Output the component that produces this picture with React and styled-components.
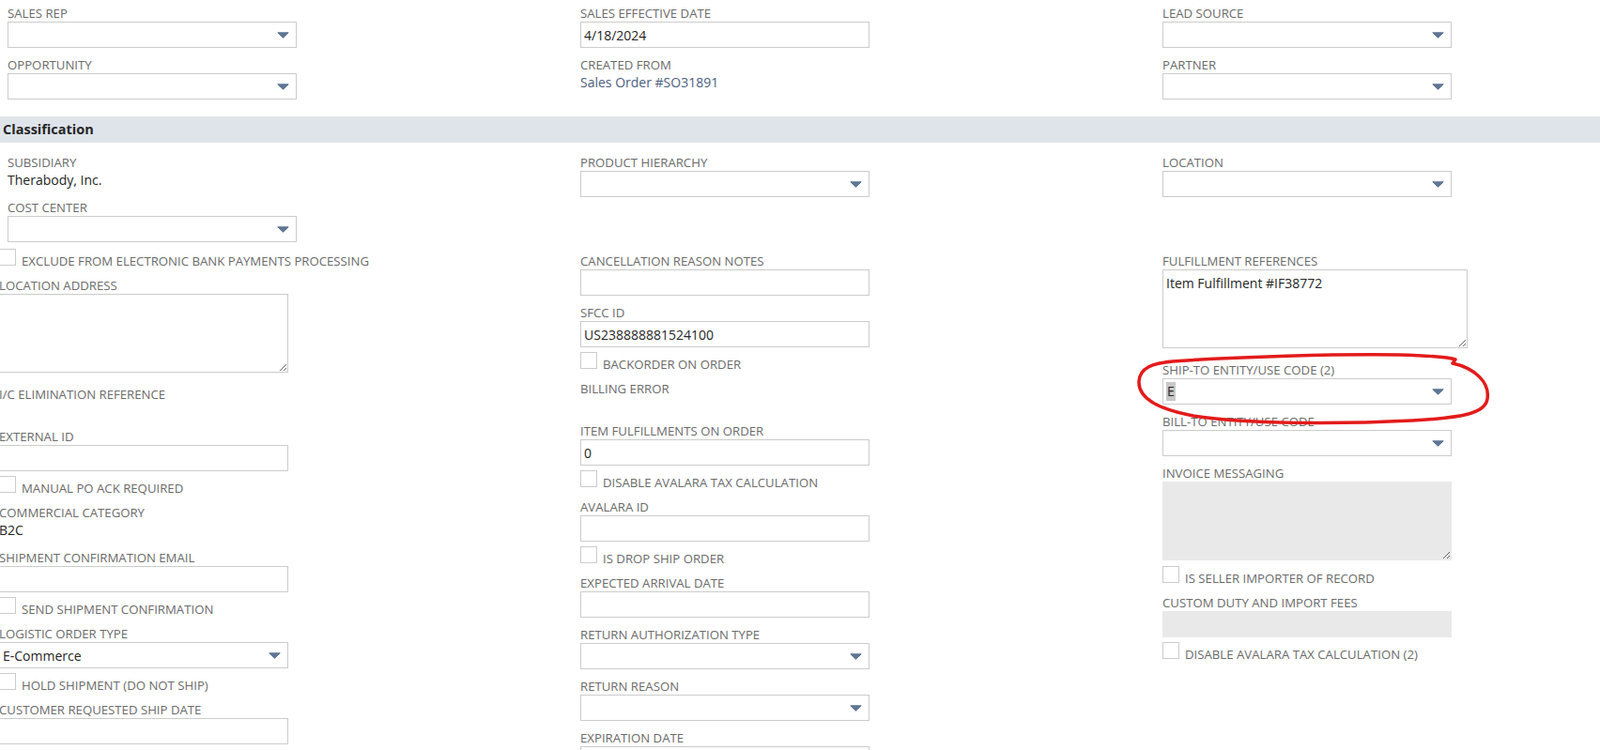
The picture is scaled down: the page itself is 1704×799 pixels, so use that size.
import React from 'react'
import styled, { createGlobalStyle } from 'styled-components'

const GlobalStyle = createGlobalStyle`
  html, body {
    margin: 0;
    padding: 0;
    background: #fff;
  }
  body {
    font-family: "Open Sans", "Liberation Sans", Arial, sans-serif;
  }
  * {
    box-sizing: border-box;
  }
`;

const Page = styled.div`
  position: relative;
  width: 1704px;
  height: 799px;
  overflow: hidden;
  background: #fff;
`;

const FieldGrid = styled.div`
  display: grid;
  grid-template-columns: 610px 620px 1fr;
  padding-left: 8px;
  margin-top: ${p => p.$top || 0}px;
`;

const Column = styled.div`
  display: flex;
  flex-direction: column;
  align-items: flex-start;
  margin-left: ${p => (p.$shift ? '-9px' : '0')};
`;

const SectionBar = styled.div`
  margin-top: 14px;
  height: 28px;
  background: #dfe4eb;
  padding-left: 3px;
  font-size: 14.5px;
  font-weight: 700;
  line-height: 28px;
  color: #262626;
`;

const FieldWrap = styled.div`
  padding: 7px 0 4px;
`;

const Label = styled.div`
  font-size: 13.2px;
  line-height: 15px;
  color: #6b6b6b;
  text-transform: uppercase;
  white-space: nowrap;
  margin-bottom: 1px;
`;

const Value = styled.div`
  min-height: 18px;
  font-size: 14px;
  line-height: 18px;
  padding: 1px 0 2px;
  color: ${p => (p.$link ? '#4d6080' : '#262626')};

  &:empty {
    padding: 0;
  }
`;

const Control = styled.div`
  display: flex;
  align-items: center;
  width: ${p => p.$w}px;
  height: 28px;
  border: 1px solid ${p => (p.$disabled ? '#e9e9e9' : '#cccccc')};
  background: ${p => (p.$disabled ? '#e9e9e9' : '#fff')};
  padding: 0 7px 0 3px;
  font-size: 14px;
  color: #262626;
`;

const ControlText = styled.span`
  flex: 1;
  white-space: nowrap;
  overflow: hidden;
`;

const Selected = styled.span`
  display: inline-block;
  background: #c8c8c8;
  line-height: 20px;
  padding: 0 1px;
`;

const Arrow = styled.svg`
  flex: none;
  width: 13px;
  height: 7px;
`;

const Area = styled.textarea`
  display: block;
  width: ${p => p.$w}px;
  height: 84px;
  margin: 0 0 ${p => (p.disabled ? 1 : 5)}px;
  border: 1px solid ${p => (p.disabled ? '#e9e9e9' : '#cccccc')};
  background: ${p => (p.disabled ? '#e9e9e9' : '#fff')};
  padding: 5px 3px;
  font-family: inherit;
  font-size: 14px;
  line-height: 18px;
  color: #262626;
  resize: both;
  outline: none;
`;

const CheckRow = styled.label`
  display: flex;
  align-items: flex-end;
  padding: 1px 0 7px;
`;

const Box = styled.span`
  flex: none;
  width: 18px;
  height: 18px;
  border: 1px solid #cccccc;
  background: #fff;
  margin-right: 6px;
`;

const CheckText = styled.span`
  font-size: 13.2px;
  line-height: 10px;
  color: #6b6b6b;
  text-transform: uppercase;
  white-space: nowrap;
`;

const Annotation = styled.svg`
  position: absolute;
  left: 1205px;
  top: 372px;
  width: 390px;
  height: 86px;
  pointer-events: none;
`;

const DropArrow = () => (
  <Arrow viewBox="0 0 13 7">
    <path d="M0.8 0.8 H12.2 L6.5 6.3 Z" fill="#5f7594" stroke="#5f7594" strokeWidth="1" strokeLinejoin="round" />
  </Arrow>
);

const Select = ({ label, w = 308, value }) => (
  <FieldWrap>
    <Label>{label}</Label>
    <Control $w={w}>
      <ControlText>{value}</ControlText>
      <DropArrow />
    </Control>
  </FieldWrap>
);

const Input = ({ label, w = 308, value, disabled }) => (
  <FieldWrap>
    <Label>{label}</Label>
    <Control $w={w} $disabled={disabled}>
      <ControlText>{value}</ControlText>
    </Control>
  </FieldWrap>
);

const TextArea = ({ label, w = 308, value = '', disabled }) => (
  <FieldWrap>
    <Label>{label}</Label>
    <Area $w={w} disabled={disabled} readOnly defaultValue={value} />
  </FieldWrap>
);

const Text = ({ label, value, link }) => (
  <FieldWrap>
    <Label>{label}</Label>
    <Value $link={link}>{value}</Value>
  </FieldWrap>
);

const Check = ({ label }) => (
  <CheckRow>
    <Box />
    <CheckText>{label}</CheckText>
  </CheckRow>
);

const App = () => {
  return (
    <Page>
      <GlobalStyle />
      <FieldGrid>
        <Column>
          <Select label="Sales Rep" />
          <Select label="Opportunity" />
        </Column>
        <Column>
          <Input label="Sales Effective Date" value="4/18/2024" />
          <Text label="Created From" value="Sales Order #SO31891" link />
        </Column>
        <Column>
          <Select label="Lead Source" />
          <Select label="Partner" />
        </Column>
      </FieldGrid>

      <SectionBar>Classification</SectionBar>

      <FieldGrid $top={7}>
        <Column>
          <Text label="Subsidiary" value="Therabody, Inc." />
          <Select label="Cost Center" />
        </Column>
        <Column>
          <Select label="Product Hierarchy" />
        </Column>
        <Column>
          <Select label="Location" />
        </Column>
      </FieldGrid>

      <FieldGrid $top={2}>
        <Column $shift>
          <Check label="Exclude from Electronic Bank Payments Processing" />
          <TextArea label="Location Address" />
          <Text label="I/C Elimination Reference" />
          <Input label="External ID" />
          <Check label="Manual PO Ack Required" />
          <Text label="Commercial Category" value="B2C" />
          <Input label="Shipment Confirmation Email" />
          <Check label="Send Shipment Confirmation" />
          <Select label="Logistic Order Type" value="E-Commerce" />
          <Check label="Hold Shipment (Do Not Ship)" />
          <Input label="Customer Requested Ship Date" />
        </Column>
        <Column>
          <Input label="Cancellation Reason Notes" />
          <Input label="SFCC ID" value="US238888881524100" />
          <Check label="Backorder on Order" />
          <Text label="Billing Error" />
          <Input label="Item Fulfillments on Order" value="0" />
          <Check label="Disable Avalara Tax Calculation" />
          <Input label="Avalara ID" />
          <Check label="Is Drop Ship Order" />
          <Input label="Expected Arrival Date" />
          <Select label="Return Authorization Type" />
          <Select label="Return Reason" />
          <Input label="Expiration Date" />
        </Column>
        <Column>
          <TextArea label="Fulfillment References" w={325} value="Item Fulfillment #IF38772" />
          <Select label="Ship-To Entity/Use Code (2)" value={<Selected>E</Selected>} />
          <Select label="Bill-To Entity/Use Code" />
          <TextArea label="Invoice Messaging" disabled />
          <Check label="Is Seller Importer of Record" />
          <Input label="Custom Duty and Import Fees" disabled />
          <Check label="Disable Avalara Tax Calculation (2)" />
        </Column>
      </FieldGrid>

      <Annotation viewBox="0 0 390 86">
        <path
          d="M285 6 C321 7 337 8 345 11 L342 15 C365 20 382 35 379 53 C377 68 354 73 299 76 C221 80 122 80 66 71 C28 64 7 52 8 34 C9 20 22 15 44 13 C111 8 221 5 285 6"
          fill="none"
          stroke="#e31b1b"
          strokeWidth="3.5"
          strokeLinecap="round"
          strokeLinejoin="round"
        />
      </Annotation>
    </Page>
  );
};

export default App;
